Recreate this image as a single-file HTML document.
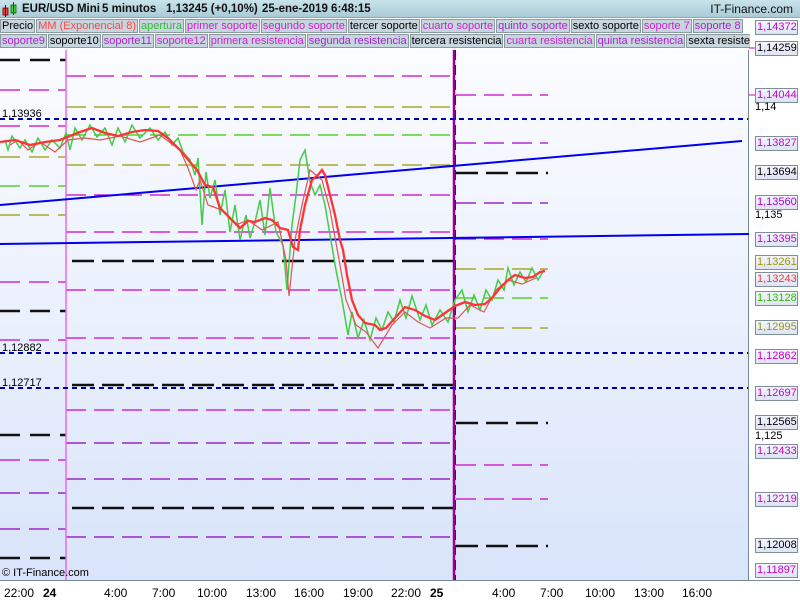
<!DOCTYPE html>
<html><head><meta charset="utf-8">
<style>
*{margin:0;padding:0;box-sizing:border-box}
body{width:800px;height:600px;overflow:hidden;background:#fff;font-family:"Liberation Sans",sans-serif;position:relative}
#title{position:absolute;left:0;top:0;width:800px;height:18px;background:linear-gradient(#c9e3ea,#a9cbd7);border-bottom:1px solid #8aa;font-size:11.5px;font-weight:bold;line-height:18px;color:#111}
#title .t{position:absolute;top:0;white-space:nowrap}
#title .r{position:absolute;right:7px;font-weight:normal;font-size:12px}
.row{position:absolute;left:0;width:750px;height:15px;background:#fff;white-space:nowrap;overflow:hidden;font-size:11px;line-height:12px}
.row span{display:inline-block;background:#c7d6de;border:1px solid #8a9a9f;margin-right:1px;padding:0 1px;height:14px}
#plot{position:absolute;left:0;top:50px;width:749px;height:530px;background:linear-gradient(#fbfcff,#d9e4fa);border-right:1px solid #789}
#xax{position:absolute;left:0;top:580px;width:800px;height:20px;border-top:1px solid #789;font-size:12px}
#xax span{position:absolute;top:5px}
.lab{position:absolute;left:755px;width:43px;height:15px;border:1px solid #7f8f99;background:linear-gradient(#f4f6ff,#dde3f4);font-size:11px;line-height:13px;padding-left:1px;white-space:nowrap;overflow:hidden}
.pl{position:absolute;left:755px;font-size:11px}
</style></head><body>
<div id="title">
<svg style="position:absolute;left:2px;top:2px" width="16" height="16"><rect x="1" y="6" width="5" height="7" fill="#e44" stroke="#600" stroke-width="0.8"/><line x1="3.5" y1="3" x2="3.5" y2="15" stroke="#600"/><rect x="9" y="3" width="5" height="8" fill="#4c4" stroke="#060" stroke-width="0.8"/><line x1="11.5" y1="0" x2="11.5" y2="13" stroke="#060"/></svg>
<span class="t" style="left:22px">EUR/USD Mini</span><span class="t" style="left:102px">5 minutos</span><span class="t" style="left:166px">1,13245 (+0,10%)</span><span class="t" style="left:262px">25-ene-2019 6:48:15</span>
<span class="r">IT-Finance.com</span></div>
<div class="row" style="top:19px"><span>Precio</span><span style="color:#f44">MM (Exponencial 8)</span><span style="color:#3b3">apertura</span><span style="color:#c2c">primer soporte</span><span style="color:#c2c">segundo soporte</span><span>tercer soporte</span><span style="color:#c2c">cuarto soporte</span><span style="color:#a2c">quinto soporte</span><span>sexto soporte</span><span style="color:#c2c">soporte 7</span><span style="color:#a2c">soporte 8</span></div>
<div class="row" style="top:34px"><span style="color:#a2c">soporte9</span><span>soporte10</span><span style="color:#a2c">soporte11</span><span style="color:#c2c">soporte12</span><span style="color:#c2c">primera resistencia</span><span style="color:#a2c">segunda resistencia</span><span>tercera resistencia</span><span style="color:#c2c">cuarta resistencia</span><span style="color:#a2c">quinta resistencia</span><span>sexta resistencia</span></div>
<div id="plot"></div>
<svg style="position:absolute;left:0;top:0" width="800" height="600">
<g fill="none" stroke-width="1.3">
<g stroke-dasharray="20,9">
<line x1="0" y1="90" x2="66" y2="90" stroke="#c0c"/>
<line x1="0" y1="126" x2="66" y2="126" stroke="#c0c"/>
<line x1="0" y1="157" x2="66" y2="157" stroke="#990"/>
<line x1="0" y1="186" x2="66" y2="186" stroke="#3c0"/>
<line x1="0" y1="215" x2="66" y2="215" stroke="#990"/>
<line x1="0" y1="282" x2="66" y2="282" stroke="#c0c"/>
<line x1="0" y1="340" x2="66" y2="340" stroke="#c0c"/>
<line x1="0" y1="460" x2="66" y2="460" stroke="#c0c"/>
<line x1="0" y1="493" x2="66" y2="493" stroke="#80b"/>
<line x1="0" y1="529" x2="66" y2="529" stroke="#80b"/>
</g>
<g stroke="#111" stroke-width="2.5" stroke-dasharray="20,10">
<line x1="0" y1="60" x2="66" y2="60"/><line x1="0" y1="311" x2="66" y2="311"/><line x1="0" y1="435" x2="66" y2="435"/><line x1="0" y1="558" x2="66" y2="558"/>
</g>
<g stroke-dasharray="20,8">
<line x1="66" y1="76" x2="454" y2="76" stroke="#c0c"/>
<line x1="66" y1="107" x2="454" y2="107" stroke="#990"/>
<line x1="66" y1="135" x2="454" y2="135" stroke="#3c0"/>
<line x1="66" y1="165" x2="454" y2="165" stroke="#990"/>
<line x1="66" y1="195" x2="454" y2="195" stroke="#c0c"/>
<line x1="66" y1="232" x2="454" y2="232" stroke="#c0c"/>
<line x1="66" y1="290" x2="454" y2="290" stroke="#c0c"/>
<line x1="66" y1="338" x2="454" y2="338" stroke="#c0c"/>
<line x1="66" y1="410" x2="454" y2="410" stroke="#c0c"/>
<line x1="66" y1="443" x2="454" y2="443" stroke="#80b"/>
<line x1="66" y1="479" x2="454" y2="479" stroke="#80b"/>
<line x1="66" y1="537" x2="454" y2="537" stroke="#80b"/>
</g>
<g stroke="#111" stroke-width="2.5" stroke-dasharray="22,8">
<line x1="72" y1="261" x2="454" y2="261"/><line x1="72" y1="385" x2="454" y2="385"/><line x1="72" y1="508" x2="454" y2="508"/>
</g>
<g stroke-dasharray="20,8">
<line x1="456" y1="95" x2="548" y2="95" stroke="#c0c"/>
<line x1="456" y1="143" x2="548" y2="143" stroke="#a0c"/>
<line x1="456" y1="203" x2="548" y2="203" stroke="#80b"/>
<line x1="456" y1="239" x2="548" y2="239" stroke="#c0c"/>
<line x1="456" y1="269" x2="548" y2="269" stroke="#990"/>
<line x1="456" y1="298" x2="548" y2="298" stroke="#3c0"/>
<line x1="456" y1="328" x2="548" y2="328" stroke="#990"/>
<line x1="456" y1="465" x2="548" y2="465" stroke="#c0c"/>
<line x1="456" y1="499" x2="548" y2="499" stroke="#c0c"/>
</g>
<g stroke="#111" stroke-width="2.5" stroke-dasharray="22,8">
<line x1="456" y1="173" x2="548" y2="173"/><line x1="456" y1="423" x2="548" y2="423"/><line x1="456" y1="546" x2="548" y2="546"/>
</g>
<line x1="66" y1="50" x2="66" y2="580" stroke="#e6e" stroke-width="1.5"/>
<line x1="454" y1="50" x2="454" y2="580" stroke="#909" stroke-width="2.5"/>
<line x1="455.5" y1="50" x2="455.5" y2="580" stroke="#222" stroke-width="1" stroke-dasharray="10,5"/>
<g stroke="#00a" stroke-width="2" stroke-dasharray="5,4">
<line x1="0" y1="119" x2="748" y2="119"/><line x1="0" y1="353" x2="748" y2="353"/><line x1="0" y1="388" x2="748" y2="388"/>
</g>
<line x1="0" y1="205" x2="742" y2="141" stroke="#00e" stroke-width="2"/>
<line x1="0" y1="244" x2="749" y2="234" stroke="#00e" stroke-width="2"/>
<polyline stroke="#4c4" stroke-width="1.5" points="5,140 8,150 12,136 20,148 25,140 32,152 38,138 45,150 52,140 60,148 66,133 70,150 75,128 82,140 90,125 97,137 105,128 112,145 118,128 125,142 132,125 140,138 150,128 158,140 165,132 172,145 178,138 183,152 190,160 195,175 198,158 202,225 206,172 210,198 215,180 220,215 225,190 230,232 235,205 240,240 246,215 250,238 255,222 260,200 265,235 270,188 276,232 283,245 287,290 292,225 296,195 300,160 305,150 310,182 315,195 320,185 325,205 330,235 336,270 342,300 348,335 352,312 358,338 364,320 370,340 376,318 382,330 388,312 394,322 400,300 406,318 412,296 420,320 426,305 432,325 440,310 448,322 455,300 462,290 468,312 474,295 480,310 486,290 492,300 498,280 504,290 508,268 514,285 520,272 526,282 532,268 538,280 544,270"/>
<polyline stroke="#d55" stroke-width="1.2" points="10,145 18,140 28,150 40,142 55,152 68,140 85,138 100,140 120,136 140,142 160,135 180,150 188,168 196,190 200,180 208,205 222,210 236,225 248,220 262,230 278,222 286,260 289,296 295,240 302,205 310,170 322,180 330,210 340,265 346,300 356,325 366,332 378,348 392,325 405,312 418,322 430,328 446,318 458,318 470,305 484,312 496,290 508,280 522,284 536,278"/>
<polyline stroke="#f33" stroke-width="2.3" points="0,142 15,140 30,145 45,142 60,140 70,136 80,132 92,128 105,133 118,136 132,132 145,130 158,131 168,138 180,150 190,162 197,170 205,185 213,187 220,208 230,218 240,228 248,221 255,222 265,218 272,220 280,228 288,230 293,247 298,250 300,230 305,205 312,180 318,175 322,170 325,175 330,195 335,215 340,240 343,250 347,275 352,300 358,315 365,323 375,325 380,330 386,328 395,318 405,307 415,310 425,316 435,320 445,313 455,306 465,302 475,305 485,304 492,298 500,288 508,280 515,275 525,278 533,277 540,272 545,271"/>
</g>
<g stroke-width="1">
<line x1="749" y1="48" x2="755" y2="48" stroke="#c0c"/><line x1="749" y1="95" x2="755" y2="95" stroke="#c0c"/>
</g>
</svg>
<div style="position:absolute;left:2px;top:108px;font-size:11px">1,13936</div>
<div style="position:absolute;left:2px;top:342px;font-size:11px">1,12882</div>
<div style="position:absolute;left:2px;top:377px;font-size:11px">1,12717</div>
<div style="position:absolute;left:2px;top:567px;font-size:11px">© IT-Finance.com</div>
<div class="lab" style="top:20px;color:#c0c">1,14372</div>
<div class="lab" style="top:41px">1,14259</div>
<div class="lab" style="top:88px;color:#c0c">1,14044</div>
<div class="pl" style="top:101px">1,14</div>
<div class="lab" style="top:136px;color:#c0c">1,13827</div>
<div class="lab" style="top:165px">1,13694</div>
<div class="lab" style="top:195px;color:#a0c">1,13560</div>
<div class="pl" style="top:209px">1,135</div>
<div class="lab" style="top:232px;color:#c0c">1,13395</div>
<div class="lab" style="top:255px;color:#990">1,13261</div>
<div class="lab" style="top:272px;color:#f33">1,13243</div>
<div class="lab" style="top:291px;color:#3b0">1,13128</div>
<div class="lab" style="top:320px;color:#990">1,12995</div>
<div class="lab" style="top:349px;color:#c0c">1,12862</div>
<div class="lab" style="top:386px;color:#c0c">1,12697</div>
<div class="lab" style="top:415px">1,12565</div>
<div class="pl" style="top:430px">1,125</div>
<div class="lab" style="top:444px;color:#c0c">1,12433</div>
<div class="lab" style="top:492px;color:#c0c">1,12219</div>
<div class="lab" style="top:538px">1,12008</div>
<div class="lab" style="top:563px;color:#c0c">1,11897</div>
<div id="xax">
<span style="left:4px">22:00</span><span style="left:43px;font-weight:bold">24</span><span style="left:104px">4:00</span><span style="left:152px">7:00</span><span style="left:197px">10:00</span><span style="left:246px">13:00</span><span style="left:294px">16:00</span><span style="left:343px">19:00</span><span style="left:391px">22:00</span><span style="left:430px;font-weight:bold">25</span><span style="left:492px">4:00</span><span style="left:540px">7:00</span><span style="left:585px">10:00</span><span style="left:634px">13:00</span><span style="left:682px">16:00</span>
</div>
</body></html>
